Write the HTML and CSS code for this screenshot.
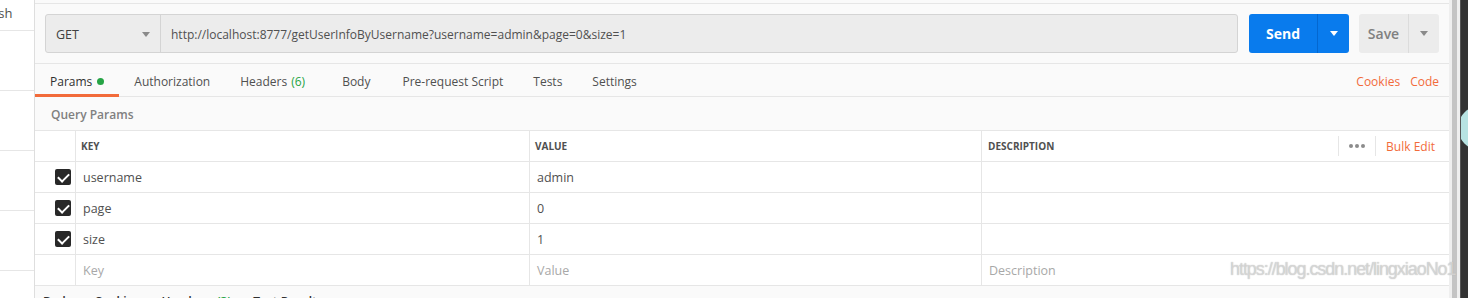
FILE: index.html
```html
<!DOCTYPE html>
<html>
  <head>
    <title>Postman - Query Params</title>
    <link rel="stylesheet" href="styles.css">
  </head>
  <body>
    <div class="app">
      <aside class="sidebar">
        <div class="side-head"><span>Refresh</span></div>
        <div class="side-item"></div>
        <div class="side-item"></div>
        <div class="side-item"></div>
        <div class="side-item"></div>
      </aside>

      <main class="main">
        <div class="top-strip"></div>

        <div class="request-bar">
          <div class="url-group">
            <div class="method">GET <span class="caret"></span></div>
            <div class="url">http://localhost:8777/getUserInfoByUsername?username=admin&amp;page=0&amp;size=1</div>
          </div>
          <div class="send">
            <span class="send-label">Send</span>
            <span class="send-drop"><span class="caret white"></span></span>
          </div>
          <div class="save">
            <span class="save-label">Save</span>
            <span class="save-drop"><span class="caret"></span></span>
          </div>
        </div>

        <div class="tabs">
          <div class="tab active">Params <span class="dot"></span></div>
          <div class="tab">Authorization</div>
          <div class="tab headers">Headers <span class="count">(6)</span></div>
          <div class="tab body">Body</div>
          <div class="tab">Pre-request Script</div>
          <div class="tab">Tests</div>
          <div class="tab">Settings</div>
          <div class="tab-links">
            <span>Cookies</span>
            <span>Code</span>
          </div>
        </div>

        <div class="section-title">Query Params</div>

        <div class="params">
          <div class="row head">
            <div class="cell check"></div>
            <div class="cell">KEY</div>
            <div class="cell">VALUE</div>
            <div class="cell desc-head">
              <span>DESCRIPTION</span>
              <div class="head-actions">
                <span class="dots"><i></i><i></i><i></i></span>
                <span class="bulk">Bulk Edit</span>
              </div>
            </div>
          </div>
          <div class="row">
            <div class="cell check"><span class="box"></span></div>
            <div class="cell">username</div>
            <div class="cell">admin</div>
            <div class="cell"></div>
          </div>
          <div class="row">
            <div class="cell check"><span class="box"></span></div>
            <div class="cell">page</div>
            <div class="cell">0</div>
            <div class="cell"></div>
          </div>
          <div class="row">
            <div class="cell check"><span class="box"></span></div>
            <div class="cell">size</div>
            <div class="cell">1</div>
            <div class="cell"></div>
          </div>
          <div class="row">
            <div class="cell check"></div>
            <div class="cell placeholder">Key</div>
            <div class="cell placeholder">Value</div>
            <div class="cell placeholder">Description</div>
          </div>
        </div>

        <div class="response-bar">
          <span>Body</span>
          <span>Cookies</span>
          <span>Headers <span class="count">(3)</span></span>
          <span>Test Results</span>
        </div>

        <div class="watermark">https://blog.csdn.net/lingxiaoNo1</div>
      </main>

      <div class="scroll"><div class="thumb"></div></div>
      <div class="dark"><div class="bubble"></div></div>
    </div>
  </body>
</html>
```

FILE: styles.css
```css
* {
  box-sizing: border-box;
}

body {
  margin: 0;
  width: 1468px;
  height: 298px;
  overflow: hidden;
  font-family: "Open Sans", "Noto Sans", sans-serif;
  font-size: 12px;
  color: #505050;
}

.app {
  display: flex;
  height: 298px;
}

/* left sidebar */
.sidebar {
  width: 35px;
  background: #fff;
  border-right: 1px solid #dedede;
  overflow: hidden;
  flex-shrink: 0;
}

.side-head {
  height: 31px;
  border-bottom: 1px solid #e6e6e6;
  line-height: 26px;
  font-size: 13px;
  white-space: nowrap;
}

.side-head span {
  margin-left: -34px;
}

.side-item {
  height: 60px;
  border-bottom: 1px solid #e6e6e6;
}

/* main */
.main {
  width: 1414px;
  flex-shrink: 0;
  background: #fafafa;
  position: relative;
  display: flex;
  flex-direction: column;
}

.top-strip {
  height: 4px;
  border-bottom: 1px solid #e6e6e6;
  flex-shrink: 0;
}

.request-bar {
  display: flex;
  height: 39px;
  margin: 10px 10px 0 10px;
  flex-shrink: 0;
}

.url-group {
  flex: 1;
  display: flex;
  border: 1px solid #d4d4d4;
  border-radius: 3px;
  background: #ececec;
}

.method {
  width: 115px;
  padding: 1px 10px 0 10px;
  border-right: 1px solid #d4d4d4;
  display: flex;
  align-items: center;
  justify-content: space-between;
  font-size: 12.5px;
  color: #404040;
}

.url {
  flex: 1;
  display: flex;
  align-items: center;
  padding: 1px 0 0 10px;
  color: #505050;
}

.caret {
  width: 0;
  height: 0;
  border-left: 4.5px solid transparent;
  border-right: 4.5px solid transparent;
  border-top: 5px solid #8a8a8a;
}

.caret.white {
  border-top-color: #fff;
}

.send {
  width: 100px;
  margin-left: 11px;
  display: flex;
  background: #097bed;
  border-radius: 3px;
  color: #fff;
  font-size: 14px;
  font-weight: 700;
}

.send-label {
  width: 69px;
  display: flex;
  align-items: center;
  justify-content: center;
  border-right: 1px solid #0467d0;
}

.send-drop, .save-drop {
  flex: 1;
  display: flex;
  align-items: center;
  justify-content: center;
}

.save {
  width: 80px;
  margin-left: 10px;
  display: flex;
  background: #ececec;
  border-radius: 3px;
  color: #808080;
  font-size: 14px;
  font-weight: 600;
}

.save-label {
  width: 50px;
  display: flex;
  align-items: center;
  justify-content: center;
  border-right: 1px solid #dcdcdc;
}

/* tabs */
.tabs {
  display: flex;
  height: 34px;
  margin-top: 10px;
  border-top: 1px solid #e6e6e6;
  border-bottom: 1px solid #e6e6e6;
  flex-shrink: 0;
}

.tab {
  padding: 4px 15px 0 15px;
  display: flex;
  align-items: center;
  border-bottom: 3px solid transparent;
  margin-bottom: -1px;
  color: #505050;
}

.tab.headers {
  padding-right: 22px;
}

.tab.body {
  padding-right: 17px;
}

.tab.active {
  border-bottom-color: #f26b3a;
  color: #303030;
}

.dot {
  width: 7px;
  height: 7px;
  border-radius: 50%;
  background: #26a445;
  margin-left: 5px;
}

.count {
  color: #26a445;
  margin-left: 4px;
}

.tab-links {
  margin-left: auto;
  display: flex;
  align-items: center;
  gap: 10px;
  padding: 2px 10px 0 0;
  color: #f26b3a;
}

.section-title {
  height: 33px;
  line-height: 35px;
  padding-left: 16px;
  font-weight: 600;
  color: #808080;
  flex-shrink: 0;
}

/* params table */
.params {
  background: #fff;
  border-top: 1px solid #e6e6e6;
  flex-shrink: 0;
}

.row {
  display: grid;
  grid-template-columns: 40px 454px 452px 1fr;
  height: 31px;
  border-bottom: 1px solid #e6e6e6;
}

.cell {
  display: flex;
  align-items: center;
  padding-left: 7px;
  border-left: 1px solid #e6e6e6;
  font-size: 12.5px;
}

.cell.check {
  border-left: none;
  padding-left: 0;
  justify-content: flex-end;
  padding-right: 4px;
}

.row.head .cell {
  font-size: 10px;
  font-weight: 700;
  padding-left: 5px;
  color: #505050;
}

.row.head .cell.desc-head {
  padding-left: 6px;
  justify-content: space-between;
}

.head-actions {
  display: flex;
  align-items: center;
  height: 20px;
}

.dots {
  height: 20px;
  width: 38px;
  display: flex;
  align-items: center;
  justify-content: center;
  gap: 2px;
  border-left: 1px solid #e6e6e6;
  border-right: 1px solid #e6e6e6;
}

.dots i {
  width: 4px;
  height: 4px;
  border-radius: 50%;
  background: #8c8c8c;
}

.row.head .bulk {
  font-size: 12px;
  font-weight: 400;
  color: #f26b3a;
  padding: 0 14px 0 10px;
}

.box {
  width: 16px;
  height: 16px;
  border-radius: 2px;
  background: #282828;
  position: relative;
}

.box::after {
  content: "";
  position: absolute;
  left: 5px;
  top: 2px;
  width: 5px;
  height: 9px;
  border-right: 2px solid #fff;
  border-bottom: 2px solid #fff;
  transform: rotate(45deg);
}

.placeholder {
  color: #a8a8a8;
}

/* response bar, cut off by the window */
.response-bar {
  display: flex;
  gap: 22px;
  padding: 8px 0 0 8px;
  line-height: 16px;
  color: #303030;
  font-weight: 600;
  white-space: nowrap;
}

.watermark {
  position: absolute;
  left: 1195px;
  top: 259px;
  z-index: 5;
  font-family: "Liberation Sans", Arial, sans-serif;
  font-size: 18px;
  letter-spacing: -1.05px;
  color: rgba(235, 235, 235, 0.6);
  text-shadow: 0 0 1px #a9a9a9;
  white-space: nowrap;
}

/* right edge */
.scroll {
  width: 11px;
  background: #efefef;
  flex-shrink: 0;
  padding-left: 3px;
}

.thumb {
  width: 5px;
  height: 298px;
  background: #c4c4c4;
}

.dark {
  width: 8px;
  background: #333;
  border-left: 1px solid #555;
  position: relative;
  overflow: hidden;
  flex-shrink: 0;
}

.bubble {
  position: absolute;
  left: -3px;
  top: 106px;
  width: 44px;
  height: 44px;
  border-radius: 50%;
  background: #b7e3e2;
}
```
